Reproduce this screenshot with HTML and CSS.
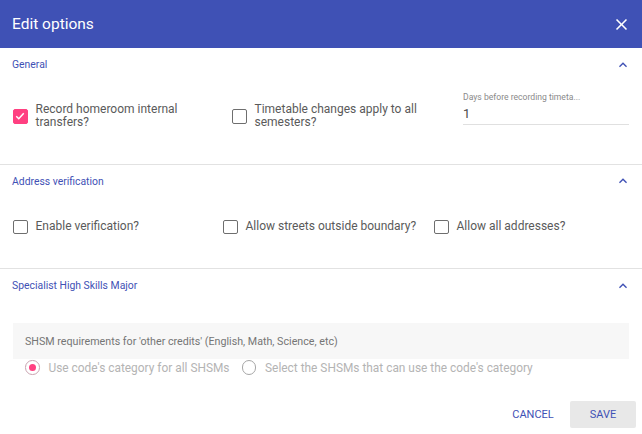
FILE: index.html
```html
<!DOCTYPE html>
<html lang="en">
<head>
<meta charset="utf-8">
<title>Edit options</title>
<link rel="stylesheet" href="styles.css">
</head>
<body>
<div class="dialog">
  <header class="dlg-head">
    <h1 class="dlg-title">Edit options</h1>
    <button class="icon-btn close" aria-label="Close">
      <svg viewBox="0 0 24 24" width="19" height="19"><path fill="currentColor" d="M19 6.41L17.59 5 12 10.59 6.41 5 5 6.41 10.59 12 5 17.59 6.41 19 12 13.41 17.59 19 19 17.59 13.41 12z"/></svg>
    </button>
  </header>

  <div class="dlg-body">
    <section class="panel">
      <div class="panel-head">
        <span class="panel-title">General</span>
        <svg class="chev" viewBox="0 0 24 24" width="16" height="16"><path fill="currentColor" d="M12 8l-6 6 1.41 1.41L12 10.83l4.59 4.58L18 14z"/></svg>
      </div>
      <div class="panel-body">
        <div class="row row-general">
          <label class="check">
            <span class="box checked"><svg viewBox="0 0 24 24" width="12" height="12"><path fill="none" stroke="#fff" stroke-width="3" d="M4.5 12.5l5 5 10-11"/></svg></span>
            <span class="check-text w1">Record homeroom internal transfers?</span>
          </label>
          <label class="check">
            <span class="box"></span>
            <span class="check-text w2">Timetable changes apply to all semesters?</span>
          </label>
          <div class="field">
            <span class="field-label">Days before recording timeta...</span>
            <span class="field-value">1</span>
          </div>
        </div>
      </div>
    </section>

    <section class="panel">
      <div class="panel-head">
        <span class="panel-title">Address verification</span>
        <svg class="chev" viewBox="0 0 24 24" width="16" height="16"><path fill="currentColor" d="M12 8l-6 6 1.41 1.41L12 10.83l4.59 4.58L18 14z"/></svg>
      </div>
      <div class="panel-body">
        <div class="row row-address">
          <label class="check"><span class="box"></span><span class="check-text">Enable verification?</span></label>
          <label class="check"><span class="box"></span><span class="check-text">Allow streets outside boundary?</span></label>
          <label class="check"><span class="box"></span><span class="check-text">Allow all addresses?</span></label>
        </div>
      </div>
    </section>

    <section class="panel panel-last">
      <div class="panel-head">
        <span class="panel-title">Specialist High Skills Major</span>
        <svg class="chev" viewBox="0 0 24 24" width="16" height="16"><path fill="currentColor" d="M12 8l-6 6 1.41 1.41L12 10.83l4.59 4.58L18 14z"/></svg>
      </div>
      <div class="panel-body panel-body-shsm">
        <div class="note">SHSM requirements for 'other credits' (English, Math, Science, etc)</div>
        <div class="radios">
          <label class="radio"><span class="dot on"></span><span class="radio-text">Use code's category for all SHSMs</span></label>
          <label class="radio"><span class="dot"></span><span class="radio-text">Select the SHSMs that can use the code's category</span></label>
        </div>
      </div>
    </section>
  </div>

  <footer class="dlg-actions">
    <button class="btn">CANCEL</button>
    <button class="btn btn-save">SAVE</button>
  </footer>
</div>
</body>
</html>
```

FILE: styles.css
```css
* { box-sizing: border-box; }

html, body {
  margin: 0;
  padding: 0;
  background: #fff;
}

body {
  font-family: Roboto, "Liberation Sans", Arial, sans-serif;
  color: #5f5f5f;
}

.dialog {
  width: 642px;
  height: 434px;
  display: flex;
  flex-direction: column;
  background: #fff;
  overflow: hidden;
}

.dlg-head {
  height: 48px;
  flex: none;
  display: flex;
  align-items: center;
  justify-content: space-between;
  padding: 0 11px 0 12px;
  background: #3f51b5;
  color: #fff;
}

.dlg-title {
  margin: 0;
  font-size: 15.5px;
  font-weight: 400;
  letter-spacing: 0;
}

.icon-btn {
  border: 0;
  background: none;
  padding: 0;
  color: #fff;
  display: flex;
  cursor: pointer;
}

.dlg-body {
  flex: 1;
  display: flex;
  flex-direction: column;
}

.panel {
  border-bottom: 1px solid #e2e2e2;
}

.panel-last {
  border-bottom: 0;
}

.panel-head {
  height: 33px;
  display: flex;
  align-items: center;
  justify-content: space-between;
  padding: 0 11px 0 12px;
}

.panel-title {
  font-size: 10.4px;
  color: #3f51b5;
}

.chev {
  color: #3f51b5;
}

.panel-body {
  padding: 22px 13px 34px;
}

.row {
  display: grid;
  align-items: start;
}

.row-general {
  grid-template-columns: 219px 231px 1fr;
}

.row-address {
  grid-template-columns: 210px 211px 1fr;
}

.check {
  display: flex;
  align-items: center;
  gap: 8px;
  font-size: 12px;
  line-height: 13.4px;
  color: #5a5a5a;
}

.check-text.w1 { max-width: 165px; }
.check-text.w2 { max-width: 180px; }

.box {
  flex: none;
  width: 14.5px;
  height: 14.5px;
  border: 1.7px solid #6e6e6e;
  border-radius: 2px;
  display: flex;
  align-items: center;
  justify-content: center;
}

.box.checked {
  background: #ff4081;
  border-color: #ff4081;
}

.field {
  display: flex;
  flex-direction: column;
  margin-top: -11.5px;
  border-bottom: 1px solid #e0e0e0;
  padding-bottom: 2px;
}

.field-label {
  font-size: 8.6px;
  line-height: 11px;
  color: #8a8a8a;
  white-space: nowrap;
}

.field-value {
  margin-top: 3px;
  font-size: 12.8px;
  line-height: 16px;
  color: #4a4a4a;
}

.panel-body-shsm {
  padding: 21px 13px 0;
}

.note {
  height: 36px;
  display: flex;
  align-items: center;
  padding: 0 12px;
  background: #f7f7f7;
  font-size: 10.7px;
  color: #757575;
}

.radios {
  display: flex;
  align-items: center;
  gap: 12px;
  padding: 1px 12px 0;
}

.radio {
  display: flex;
  align-items: center;
  gap: 9px;
  font-size: 11.9px;
  line-height: 14px;
  color: #b4b4b4;
}

.dot {
  flex: none;
  width: 14.5px;
  height: 14.5px;
  border: 1.7px solid #a6a6a6;
  border-radius: 50%;
  display: flex;
  align-items: center;
  justify-content: center;
}

.dot.on {
  border-color: #c9a3b0;
}

.dot.on::after {
  content: "";
  width: 7.5px;
  height: 7.5px;
  border-radius: 50%;
  background: #ff4081;
}

.dlg-actions {
  flex: none;
  display: flex;
  justify-content: flex-end;
  gap: 4px;
  padding: 0 6px 6px;
}

.btn {
  min-width: 66px;
  height: 27px;
  padding: 0 8px;
  border: 0;
  border-radius: 2px;
  background: transparent;
  font-family: Roboto, "Liberation Sans", Arial, sans-serif;
  font-size: 11px;
  font-weight: 400;
  color: #3f51b5;
  cursor: pointer;
}

.btn-save {
  background: #e8e8e8;
}
```
